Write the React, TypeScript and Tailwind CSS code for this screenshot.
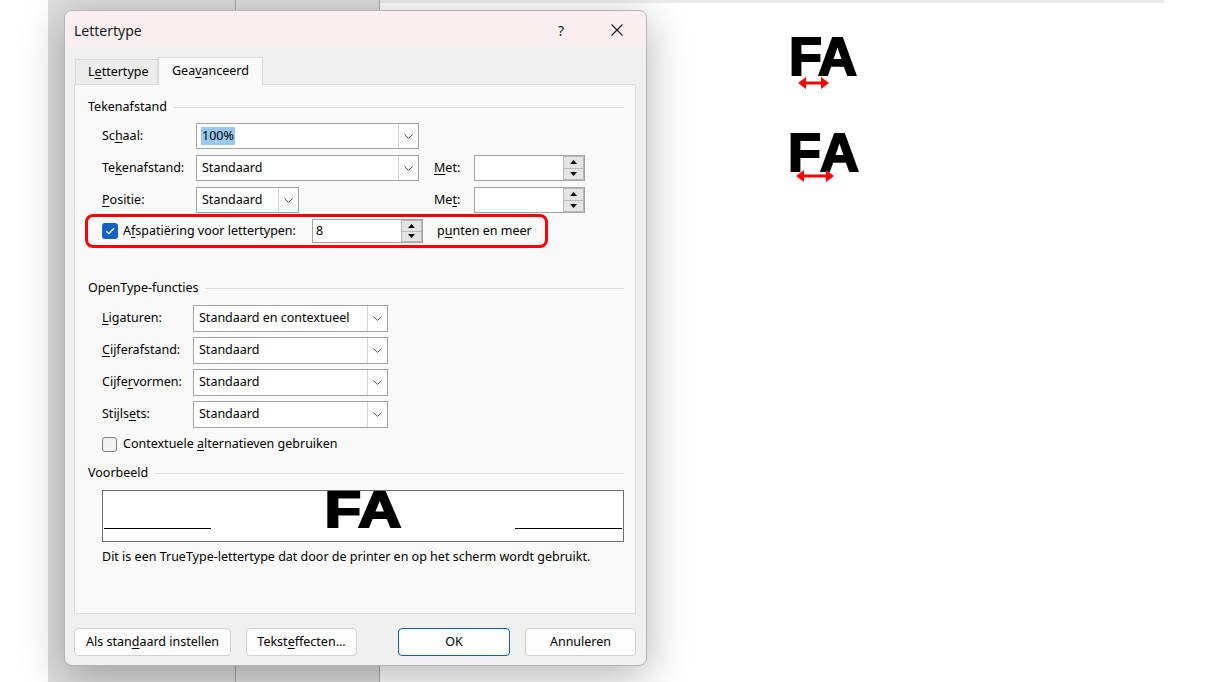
import React from "react";

const U = ({ children }: { children: React.ReactNode }) => (
  <span className="underline underline-offset-[2px] decoration-1">{children}</span>
);

const Chevron = () => (
  <svg width="9" height="5" viewBox="0 0 9 5">
    <path d="M0.5 0.5 L4.5 4.5 L8.5 0.5" fill="none" stroke="#5c5c5c" strokeWidth="1" />
  </svg>
);

const Combo = ({
  value,
  className,
  highlight,
}: {
  value: string;
  className: string;
  highlight?: boolean;
}) => (
  <div className={`flex h-full bg-white border border-[#a3a3a3] ${className}`}>
    <div className="flex-1 flex items-center pl-[4px]">
      {highlight ? <span className="bg-[#99c9ef] px-px">{value}</span> : <span className="pl-px">{value}</span>}
    </div>
    <div className="w-[20px] border-l border-[#d4d4d4] flex items-center justify-center">
      <Chevron />
    </div>
  </div>
);

const Tri = ({ up }: { up?: boolean }) => (
  <svg width="7" height="4" viewBox="0 0 7 4">
    <path d={up ? "M0 4 L3.5 0 L7 4 Z" : "M0 0 L3.5 4 L7 0 Z"} fill="#000" />
  </svg>
);

const Spin = ({ value }: { value?: string }) => (
  <div className="flex h-full w-[111px] bg-white border border-[#a3a3a3]">
    <div className="flex-1 flex items-center pl-[3px]">{value}</div>
    <div className="w-[21px] flex flex-col">
      <div className="flex-1 bg-[#e4e4e4] border border-[#b9b9b9] flex items-center justify-center">
        <Tri up />
      </div>
      <div className="flex-1 bg-[#e4e4e4] border border-t-0 border-[#b9b9b9] flex items-center justify-center">
        <Tri />
      </div>
    </div>
  </div>
);

const Group = ({ title }: { title: string }) => (
  <div className="flex items-center h-[16px]">
    <span>{title}</span>
    <div className="flex-1 h-px bg-[#dcdcdc] ml-[6px]" />
  </div>
);

const Arrow = ({ w }: { w: number }) => (
  <svg width={w} height="12" viewBox={`0 0 ${w} 12`}>
    <path d={`M0 6 L8 0 L8 12 Z M${w} 6 L${w - 8} 0 L${w - 8} 12 Z`} fill="#ff0000" />
    <rect x="7" y="4.5" width={w - 14} height="3" fill="#ff0000" />
  </svg>
);

const Dialog = () => (
  <div className="absolute left-[64px] top-[10px] w-[583px] h-[656px] rounded-[8px] border border-[#b4b4b4] bg-[#f0f0f0] overflow-hidden shadow-[0_10px_44px_rgba(0,0,0,0.3)] flex flex-col">
    {/* title bar */}
    <div className="h-[36px] bg-[#f9eff0] flex items-center pl-[9px] pt-[2px] shrink-0">
      <span className="text-[14px] text-[#1a1a1a]">Lettertype</span>
      <span className="ml-auto text-[14px] text-[#1a1a1a]">?</span>
      <div className="ml-[47px] mr-[23px] flex items-center">
        <svg width="12" height="12" viewBox="0 0 12 12">
          <path d="M0.5 0.5 L11.5 11.5 M11.5 0.5 L0.5 11.5" stroke="#1a1a1a" strokeWidth="1.1" />
        </svg>
      </div>
    </div>

    {/* tabs */}
    <div className="h-[37px] flex items-end pl-[10px] shrink-0">
      <div className="w-[83px] h-[25px] border border-b-0 border-[#d9d9d9] bg-[#ededed] flex items-center pl-[12px] pt-[1px]">
        L<U>e</U>ttertype
      </div>
      <div className="relative z-10 w-[105px] h-[28px] -mb-px border border-b-0 border-[#d9d9d9] bg-[#f9f9f9] flex items-center pl-[13px]">
        Gea<U>v</U>anceerd
      </div>
    </div>

    {/* panel */}
    <div className="ml-[9px] w-[562px] h-[530px] border border-[#dcdcdc] bg-[#f9f9f9] pl-[13px] pr-[11px] pt-[14px] shrink-0">
      <Group title="Tekenafstand" />
      <div className="mt-[8px] pl-[14px] grid grid-cols-[94px_223px_15px_40px_111px] auto-rows-[26px] gap-y-[6px]">
        <div className="flex items-center">
          Sc<U>h</U>aal:
        </div>
        <Combo value="100%" className="w-[223px]" highlight />
        <div />
        <div />
        <div />

        <div className="flex items-center">
          Te<U>k</U>enafstand:
        </div>
        <Combo value="Standaard" className="w-[223px]" />
        <div />
        <div className="flex items-center">
          <U>M</U>et:
        </div>
        <Spin />

        <div className="flex items-center">
          <U>P</U>ositie:
        </div>
        <Combo value="Standaard" className="w-[103px]" />
        <div />
        <div className="flex items-center">
          Me<U>t</U>:
        </div>
        <Spin />
      </div>

      <div className="mt-[1px] -ml-[3px] w-[463px] h-[34px] border-[3px] border-[#ff0000] rounded-[8px] flex items-center pl-[14px]">
        <div className="w-[16px] h-[16px] rounded-[3px] bg-[#1662c4] flex items-center justify-center">
          <svg width="10" height="8" viewBox="0 0 10 8">
            <path d="M1 4 L3.8 6.6 L9 1.2" fill="none" stroke="#fff" strokeWidth="1.3" />
          </svg>
        </div>
        <div className="ml-[5px] w-[189px]">
          A<U>f</U>spatiëring voor lettertypen:
        </div>
        <div className="h-[24px]">
          <Spin value="8" />
        </div>
        <div className="ml-[14px]">
          p<U>u</U>nten en meer
        </div>
      </div>

      <div className="mt-[32px]">
        <Group title="OpenType-functies" />
      </div>
      <div className="mt-[9px] pl-[14px] grid grid-cols-[91px_195px] auto-rows-[27px] gap-y-[5px]">
        <div className="flex items-center">
          <U>L</U>igaturen:
        </div>
        <Combo value="Standaard en contextueel" className="w-[195px]" />
        <div className="flex items-center">
          <U>C</U>ijferafstand:
        </div>
        <Combo value="Standaard" className="w-[195px]" />
        <div className="flex items-center">
          Cijfe<U>r</U>vormen:
        </div>
        <Combo value="Standaard" className="w-[195px]" />
        <div className="flex items-center">
          Stijls<U>e</U>ts:
        </div>
        <Combo value="Standaard" className="w-[195px]" />
      </div>
      <div className="mt-[8px] pl-[14px] h-[16px] flex items-center">
        <div className="w-[15px] h-[15px] rounded-[3px] border border-[#7d7d7d] bg-[#f2f2f2]" />
        <div className="ml-[6px]">
          Contextuele <U>a</U>lternatieven gebruiken
        </div>
      </div>

      <div className="mt-[13px]">
        <Group title="Voorbeeld" />
      </div>
      <div className="mt-[9px] ml-[14px] w-[522px] h-[52px] border border-[#6e6e6e] bg-white flex items-start justify-between">
        <div className="mt-[37px] ml-px w-[107px] h-px bg-black" />
        <div className="font-['Liberation_Sans',sans-serif] font-bold text-[50px] leading-[38px] h-[38px] scale-x-[1.2] [-webkit-text-stroke:2px_#000]">
          FA
        </div>
        <div className="mt-[37px] mr-px w-[107px] h-px bg-black" />
      </div>
      <div className="mt-[7px] pl-[14px] leading-[16px]">
        Dit is een TrueType-lettertype dat door de printer en op het scherm wordt gebruikt.
      </div>
    </div>

    {/* buttons */}
    <div className="mt-[14px] flex">
      <button className="ml-[9px] w-[157px] h-[28px] rounded-[4px] border border-[#d1d1d1] bg-[#fdfdfd]">
        Als stan<U>d</U>aard instellen
      </button>
      <button className="ml-[15px] w-[111px] h-[28px] rounded-[4px] border border-[#d1d1d1] bg-[#fdfdfd]">
        Tekst<U>e</U>ffecten...
      </button>
      <button className="ml-[41px] w-[112px] h-[28px] rounded-[4px] border border-[#0f5fb8] bg-[#fdfdfd]">
        OK
      </button>
      <button className="ml-[15px] w-[111px] h-[28px] rounded-[4px] border border-[#d1d1d1] bg-[#fdfdfd]">
        Annuleren
      </button>
    </div>
  </div>
);

export default function App() {
  return (
    <div className="relative w-[1212px] h-[682px] overflow-hidden bg-white font-['Segoe_UI','Noto_Sans',sans-serif] text-[12.5px] text-black">
      <div className="flex h-full">
        <div className="w-[48px]" />
        <div className="w-[188px] bg-[#dedede] border-r border-[#a8a8a8]" />
        <div className="w-[144px] bg-[#dedede] border-r border-[#a8a8a8]" />
        <div className="flex-1 flex flex-col">
          <div className="h-[3px] bg-[#ececec] mr-[48px]" />
          <div className="pl-[409px] pt-[26px] flex flex-col items-start font-['Liberation_Sans',sans-serif] font-bold [-webkit-text-stroke:2px_#000]">
            <div className="text-[54px] leading-none h-[54px] tracking-[-1px]">FA</div>
            <div className="-mt-[6px] ml-[9px] h-[12px] flex">
              <Arrow w={31} />
            </div>
            <div className="mt-[36px] ml-[-1px] text-[54px] leading-none h-[54px] tracking-[2px]">FA</div>
            <div className="-mt-[9px] ml-[7px] h-[12px] flex">
              <Arrow w={38} />
            </div>
          </div>
        </div>
      </div>
      <Dialog />
    </div>
  );
}
